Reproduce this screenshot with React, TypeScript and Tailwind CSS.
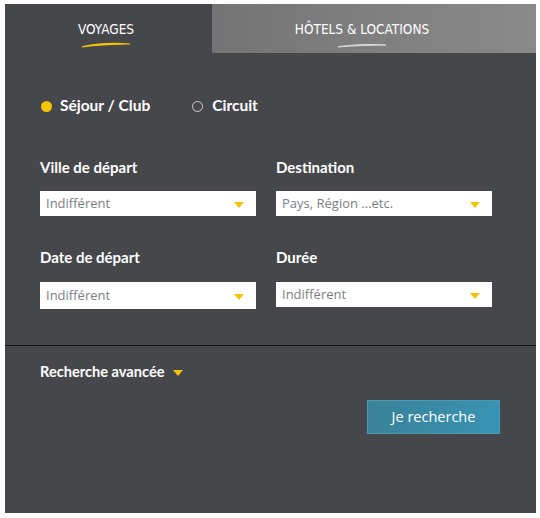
const labelFont = { fontFamily: "Lato, 'Noto Sans', sans-serif" };
const tabFont = {
  fontFamily: "'Liberation Sans Narrow', 'DejaVu Sans Condensed', 'Liberation Sans', sans-serif",
};

function Caret({ className = "" }: { className?: string }) {
  return (
    <svg width="10" height="6" viewBox="0 0 10 6" className={className}>
      <path d="M0 0 L10 0 L5 6 Z" fill="#f2c500" />
    </svg>
  );
}

function Select({ value, height }: { value: string; height: string }) {
  return (
    <div
      className={`flex items-center justify-between bg-white pl-[6px] pr-[12px] ${height}`}
    >
      <span
        className="text-[13px] text-[#7d7e84]"
        style={{ fontFamily: "'Open Sans', sans-serif" }}
      >
        {value}
      </span>
      <Caret className="mt-[2px]" />
    </div>
  );
}

function Field({
  label,
  value,
  gap,
  height,
}: {
  label: string;
  value: string;
  gap: string;
  height: string;
}) {
  return (
    <div className="flex flex-col">
      <div
        className={`h-[20px] text-[15px] leading-[20px] font-bold text-white ${gap}`}
        style={labelFont}
      >
        {label}
      </div>
      <Select value={value} height={height} />
    </div>
  );
}

export default function App() {
  return (
    <div className="h-[518px] w-[540px] bg-white pt-[4px] pl-[5px]">
      <div className="flex h-[509px] w-[531px] flex-col bg-[#46474b]">
        {/* onglets */}
        <div className="flex h-[49px]">
          <div className="flex w-[207px] flex-col items-center pt-[17px] pr-[5px]">
            <span className="text-[13.5px] leading-[16px] text-white" style={tabFont}>
              VOYAGES
            </span>
            <svg width="50" height="6" viewBox="0 0 52 6" className="mt-[5px]">
              <path
                d="M1 5 C14 1.5 36 0.5 51 2 C36 2.2 16 3 1 5 Z"
                fill="#f2c500"
                stroke="#f2c500"
                strokeWidth="1.2"
              />
            </svg>
          </div>
          <div className="flex flex-1 flex-col items-center bg-gradient-to-r from-[#747475] to-[#8a8a8b] pt-[17px] pr-[24px]">
            <span className="text-[13.5px] leading-[16px] text-white" style={tabFont}>
              HÔTELS &amp; LOCATIONS
            </span>
            <svg width="50" height="5" viewBox="0 0 52 5" className="mt-[6px]">
              <path
                d="M1 4 C14 1.5 36 0.8 51 2 C36 2.2 16 2.6 1 4 Z"
                fill="#d8d8d8"
                stroke="#d8d8d8"
                strokeWidth="1"
              />
            </svg>
          </div>
        </div>

        {/* type */}
        <div className="mt-[43px] flex h-[20px] items-center px-[36px]">
          <div className="flex items-center">
            <span className="h-[11px] w-[11px] rounded-full bg-[#f2c500]" />
            <span
              className="ml-[8px] text-[15.5px] font-bold text-white"
              style={labelFont}
            >
              Séjour / Club
            </span>
          </div>
          <div className="ml-[42px] flex items-center">
            <span className="h-[11px] w-[11px] rounded-full border border-[#d0d0d0]" />
            <span
              className="ml-[9px] text-[15.5px] font-bold text-white"
              style={labelFont}
            >
              Circuit
            </span>
          </div>
        </div>

        {/* champs */}
        <div className="mt-[41px] grid grid-cols-[216px_216px] gap-x-[20px] px-[35px]">
          <Field label="Ville de départ" value="Indifférent" gap="mb-[14px]" height="h-[25px]" />
          <Field label="Destination" value="Pays, Région ...etc." gap="mb-[14px]" height="h-[25px]" />
        </div>
        <div className="mt-[31px] grid grid-cols-[216px_216px] items-start gap-x-[20px] px-[35px]">
          <Field label="Date de départ" value="Indifférent" gap="mb-[15px]" height="h-[27px]" />
          <Field label="Durée" value="Indifférent" gap="mb-[15px]" height="h-[25px]" />
        </div>

        <div className="mt-[36px] h-px bg-[#111214]" />

        <div className="mt-[16px] flex h-[20px] items-center px-[35px]">
          <span className="text-[14.6px] font-bold text-white" style={labelFont}>
            Recherche avancée
          </span>
          <Caret className="ml-[9px] mt-[2px]" />
        </div>

        <div className="mt-[18px] flex justify-end pr-[36px]">
          <button
            className="h-[34px] w-[133px] border border-[#4a9bb8] bg-gradient-to-r from-[#3a8299] to-[#3893b3] text-[14.5px] text-white"
            style={{ fontFamily: "'Open Sans', sans-serif" }}
          >
            Je recherche
          </button>
        </div>
      </div>
    </div>
  );
}
